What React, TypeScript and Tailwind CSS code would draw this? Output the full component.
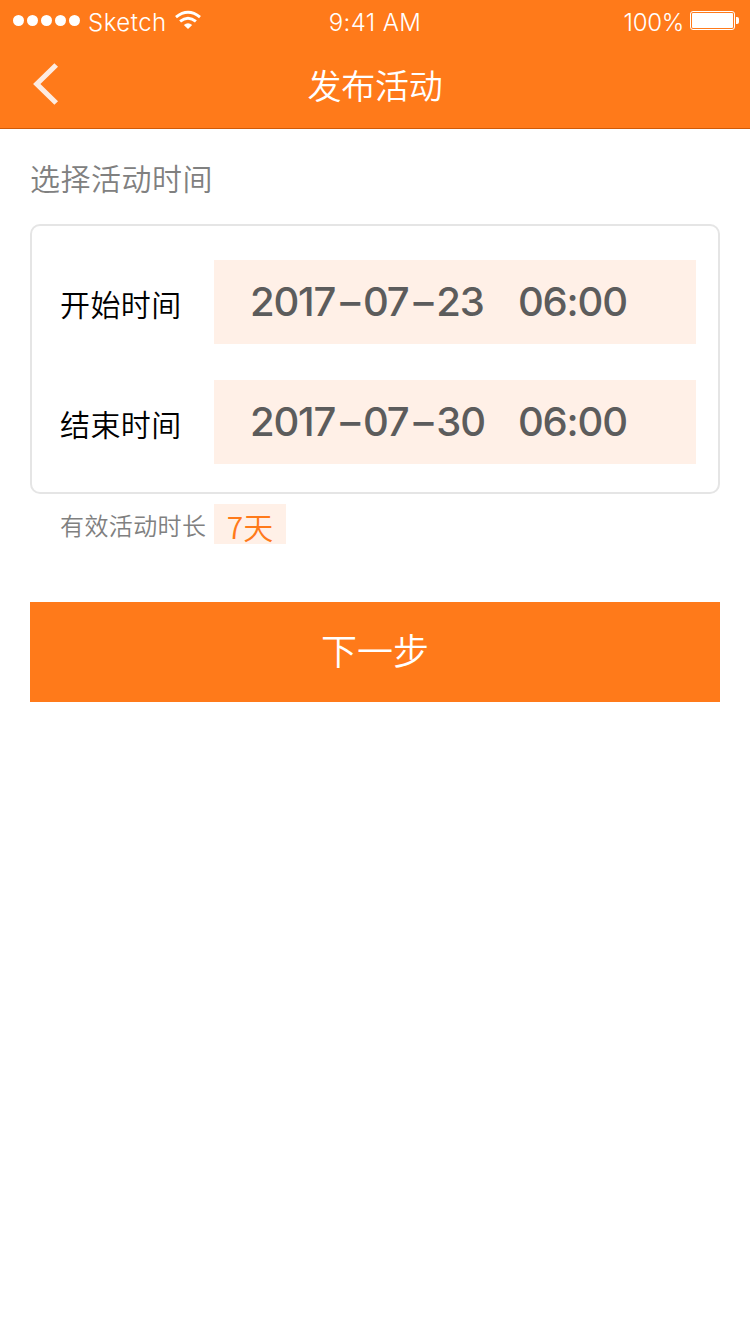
import { Fragment } from "react";

function StatusBar() {
  return (
    <div className="grid h-10 grid-cols-3 text-[24px] leading-[46px]">
      <div className="flex pl-[13px]">
        <svg className="mt-[15px] shrink-0" width="68" height="12" viewBox="0 0 68 12" fill="currentColor">
          <circle cx="5.5" cy="5.5" r="5.5" />
          <circle cx="19.5" cy="5.5" r="5.5" />
          <circle cx="33.5" cy="5.5" r="5.5" />
          <circle cx="47.5" cy="5.5" r="5.5" />
          <circle cx="61.5" cy="5.5" r="5.5" />
        </svg>
        <span className="ml-[7px] w-[86px] tracking-[0.5px]">Sketch</span>
        <svg className="mt-[10px] shrink-0" width="28" height="20" viewBox="0 0 28 20" fill="none" stroke="currentColor">
          <path d="M2 7.1Q14 -2.5 26 7.1" strokeWidth="3" />
          <path d="M6.1 11.4Q14 5.1 21.9 11.4" strokeWidth="3" />
          <path d="M14 19L9.8 14.9Q14 11.4 18.2 14.9Z" fill="currentColor" stroke="none" />
        </svg>
      </div>
      <div className="text-center tracking-[0.4px]">9:41 AM</div>
      <div className="flex justify-end pr-[11px]">
        <span className="tracking-[-0.3px]">100%</span>
        <svg className="ml-[6px] mt-[11px] shrink-0" width="49" height="19" viewBox="0 0 49 19" fill="none">
          <rect x="0.5" y="0.5" width="44" height="18" rx="2.5" stroke="currentColor" />
          <rect x="2" y="2" width="41" height="15" rx="1" fill="currentColor" />
          <path d="M46 6h1q2 0 2 2v3q0 2-2 2h-1z" fill="currentColor" />
        </svg>
      </div>
    </div>
  );
}

function TimeRow({ label, date, time }: { label: string; date: string[]; time: string }) {
  return (
    <div className="flex h-[84px] items-center">
      <span className="w-[154px] pt-[2px] text-[30px] tracking-[0.4px] text-black">{label}</span>
      <div className="flex h-full flex-1 items-center bg-[#fff0e7] pl-[36px] font-['Inter',sans-serif] text-[40px] font-[450] tracking-[-1.2px] text-[#5c5c5c]">
        <span className="w-[268px] whitespace-nowrap">
          {date.map((part, i) => (
            <Fragment key={i}>
              {i > 0 && <span className="pl-[5px] pr-[4px]">–</span>}
              {part}
            </Fragment>
          ))}
        </span>
        <span>{time}</span>
      </div>
    </div>
  );
}

export default function App() {
  return (
    <div className="min-h-[1334px] w-[750px] bg-white font-['Noto_Sans_CJK_SC',sans-serif] font-[350]">
      <header className="h-[129px] border-b border-[#cf5a08] bg-[#ff7a1a] text-white">
        <div className="font-['Inter',sans-serif] font-[360]">
          <StatusBar />
        </div>
        <div className="grid h-[88px] grid-cols-3 items-center">
          <button className="ml-[32px] w-7" aria-label="返回">
            <svg width="28" height="44" viewBox="0 0 28 44" fill="none">
              <path d="M24.2 3L4.8 22L24.2 41" stroke="#fdebe1" strokeWidth="5.2" />
            </svg>
          </button>
          <h1 className="text-center text-[34px] tracking-[-0.2px]">发布活动</h1>
        </div>
      </header>
      <main className="px-[30px]">
        <h2 className="h-[95px] pt-[26px] text-[30px] leading-[44px] tracking-[0.5px] text-[#808080]">选择活动时间</h2>
        <section className="flex h-[270px] flex-col gap-9 rounded-[10px] border-2 border-[#e5e5e5] pl-[28px] pr-[22px] pt-[34px]">
          <TimeRow label="开始时间" date={["2017", "07", "23"]} time="06:00" />
          <TimeRow label="结束时间" date={["2017", "07", "30"]} time="06:00" />
        </section>
        <div className="mt-[10px] flex h-10 pl-[30px]">
          <span className="w-[154px] text-[24px] leading-[41px] tracking-[0.4px] text-[#808080]">有效活动时长</span>
          <span className="w-[72px] bg-[#fff0e7] text-center text-[30px] leading-[44px] text-[#ff7a1a]">7天</span>
        </div>
        <button className="mt-[58px] block h-[100px] w-full bg-[#ff7a1a] pb-[6px] text-[36px] text-white">下一步</button>
      </main>
    </div>
  );
}
